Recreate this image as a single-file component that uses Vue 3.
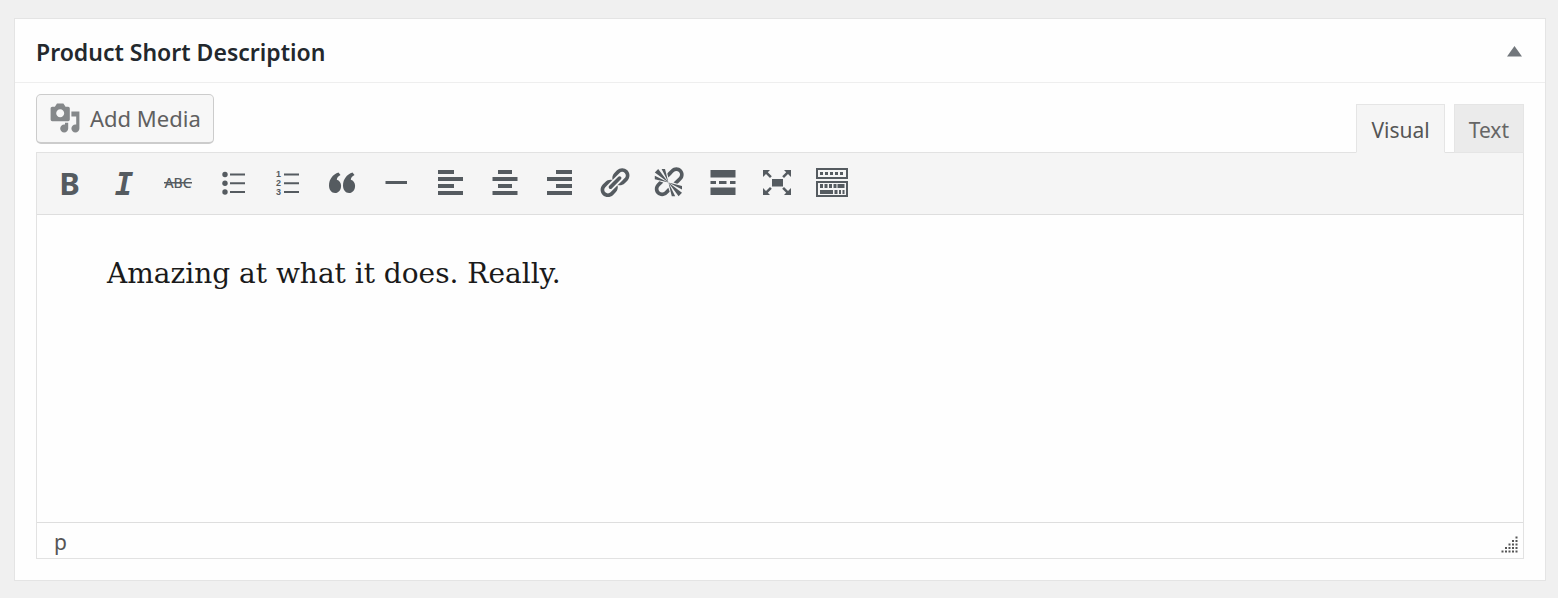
<script setup>
import { ref } from 'vue';

const title = 'Product Short Description';
const isOpen = ref(true);
const activeTab = ref('visual');
const content = ref('Amazing at what it does. Really.');

const tabs = [
    { id: 'visual', label: 'Visual' },
    { id: 'text', label: 'Text' },
];

// Each icon is drawn on a 40x40 canvas
const tools = [
    { id: 'bold', label: 'Bold' },
    { id: 'italic', label: 'Italic' },
    { id: 'strike', label: 'Strikethrough' },
    { id: 'bullets', label: 'Bulleted list', path: 'M17 10.5h15v2H17zM17 19.3h15v2H17zM17 28h15v2H17z' },
    { id: 'numbers', label: 'Numbered list', path: 'M17 10.5h15v2H17zM17 19.3h15v2H17zM17 28h15v2H17z' },
    { id: 'quote', label: 'Blockquote', path: 'M16.5 9.5l2 2.5c-2.3 1.2-3.5 2.8-3.7 4.7 2.6.7 4.3 3 4.3 6 0 4.2-2.6 7.3-6 7.3-3.7 0-6.1-3.2-6.1-7.5 0-6.3 3.7-11 9.5-13zM30.5 9.5l2 2.5c-2.3 1.2-3.5 2.8-3.7 4.7 2.6.7 4.3 3 4.3 6 0 4.2-2.6 7.3-6 7.3-3.7 0-6.1-3.2-6.1-7.5 0-6.3 3.7-11 9.5-13z' },
    { id: 'line', label: 'Horizontal line', path: 'M9.5 18H31v3H9.5z' },
    { id: 'left', label: 'Align left', path: 'M8 7h16v4H8zM8 14h25v4H8zM8 21h16v4H8zM8 28h25v4H8z' },
    { id: 'center', label: 'Align center', path: 'M13 7h14v4H13zM7.5 14h25v4h-25zM13 21h14v4H13zM7.5 28h25v4h-25z' },
    { id: 'right', label: 'Align right', path: 'M17 7h16v4H17zM8 14h25v4H8zM17 21h16v4H17zM8 28h25v4H8z' },
    { id: 'link', label: 'Insert link' },
    { id: 'unlink', label: 'Remove link' },
    { id: 'more', label: 'Read more', path: 'M7.5 7h25v7.5h-25zM7.5 18H13v3H7.5zM16 18h7.5v3H16zM27 18h5.5v3H27zM7.5 24.5h25V32h-25z' },
    { id: 'fullscreen', label: 'Fullscreen', path: 'M15 16h11v7.5H15zM6 7h7l-2.2 2.2 4 4L13 15l-4-4-3 3zM34 7v7l-3-3-4 4-1.800-1.800 4-4L27 7zM6 32v-7l3 3 4-4 1.8 1.8-4 4L13 32zM34 32h-7l2.2-2.2-4-4L27 24l4 4 3-3z' },
    { id: 'toolbar', label: 'Toolbar toggle', path: 'M4 5h32v11H4zM6 7v7h28V7zM4 18h32v16H4zM6 20v12h28V20zM8 9h3v3H8zM13 9h3v3h-3zM18 9h3v3h-3zM23 9h3v3h-3zM28 9h3v3h-3zM8 21h3v4H8zM12.5 21h3v4h-3zM17 21h3v4h-3zM21.5 21h3v4h-3zM25.5 21h7v4h-7zM8 27h13v4H8zM22.5 27h3v4h-3zM27 27h2v4h-2zM30.5 27h2v4h-2z' },
];

const linkPath = 'M17.74 2.76c1.68 1.69 1.68 4.41 0 6.1l-1.53 1.52c-1.12 1.12-2.7 1.47-4.14 1.09l2.62-2.61.76-.77.76-.76c.84-.84.84-2.2 0-3.04-.84-.85-2.2-.85-3.04 0l-.77.76-3.38 3.38c-.37-1.44-.02-3.02 1.1-4.14l1.52-1.53c1.69-1.68 4.42-1.68 6.1 0zM8.59 13.43l5.34-5.34c.42-.42.42-1.1 0-1.52-.44-.43-1.13-.39-1.53 0l-5.33 5.34c-.42.42-.42 1.1 0 1.52.44.43 1.13.39 1.52 0zm-.76 2.29l4.14-4.15c.38 1.44.03 3.02-1.09 4.14l-1.52 1.53c-1.69 1.68-4.41 1.68-6.1 0-1.68-1.68-1.68-4.42 0-6.1l1.53-1.52c1.12-1.12 2.7-1.47 4.14-1.1l-4.14 4.15c-.85.84-.85 2.2 0 3.05.84.84 2.2.84 3.04 0z';
const unlinkPath = 'M17.74 2.26c1.68 1.69 1.68 4.41 0 6.1l-1.53 1.52c-.32.33-.69.58-1.08.77L13 10l1.69-1.64.76-.77.76-.76c.84-.84.84-2.2 0-3.04-.84-.85-2.2-.85-3.04 0l-.77.76-.76.76L10 7l-.65-2.14c.19-.38.44-.75.77-1.07l1.52-1.53c1.69-1.68 4.42-1.68 6.1 0zM2 4l8 6-6-8zm4-2l4 8-2-8H6zM2 6l8 4-8-2V6zm7.36 7.69L10 13l.74 2.35-1.38 1.39c-1.69 1.68-4.41 1.68-6.1 0-1.68-1.68-1.68-4.42 0-6.1l1.39-1.38L7 10l-.69.64-1.52 1.53c-.85.84-.85 2.2 0 3.04.84.85 2.2.85 3.04 0zM18 16l-8-6 6 8zm-4 2l-4-8 2 8h2zm4-4l-8-4 8 2v2z';
const mediaPath = 'M13 11V4c0-.55-.45-1-1-1h-1.67L9 1H5L3.67 3H2c-.55 0-1 .45-1 1v7c0 .55.45 1 1 1h10c.55 0 1-.45 1-1zM7 4.5c1.38 0 2.5 1.12 2.5 2.5S8.38 9.5 7 9.5 4.5 8.38 4.5 7 5.62 4.5 7 4.5zM14 6h5v10.5c0 1.38-1.12 2.5-2.5 2.5S14 17.88 14 16.5s1.12-2.5 2.5-2.5c.17 0 .34.02.5.05V9h-3V6zm-4 8.05V13h2v3.5c0 1.38-1.12 2.5-2.5 2.5S7 17.88 7 16.5 8.12 14 9.5 14c.17 0 .34.02.5.05z';
</script>

<template>
    <section class="postbox">
        <header class="postbox-header">
            <h2 class="postbox-title">{{ title }}</h2>
            <button type="button" class="toggle-button" aria-label="Toggle panel" :aria-expanded="isOpen" @click="isOpen = !isOpen">
                <svg class="toggle-icon" viewBox="0 0 16 12"><path d="M8.5 0L16 10.5H1z" /></svg>
            </button>
        </header>

        <div v-if="isOpen" class="inside">
            <div class="editor-tools">
                <button type="button" class="media-button">
                    <svg class="media-icon" viewBox="0 0 20 20"><path fill-rule="evenodd" :d="mediaPath" /></svg>
                    Add Media
                </button>
                <div class="editor-tabs">
                    <button
                        v-for="tab in tabs"
                        :key="tab.id"
                        type="button"
                        class="tab"
                        :class="{ active: activeTab === tab.id }"
                        @click="activeTab = tab.id"
                    >{{ tab.label }}</button>
                </div>
            </div>

            <div class="editor">
                <div class="toolbar">
                    <div class="toolbar-group" role="toolbar" aria-label="Formatting">
                        <button v-for="tool in tools" :key="tool.id" type="button" class="tool" :aria-label="tool.label">
                            <svg class="tool-icon" viewBox="0 0 40 40">
                                <text v-if="tool.id === 'bold'" class="glyph-bold" x="20.5" y="32">B</text>
                                <text v-if="tool.id === 'italic'" class="glyph-italic" x="20" y="32">I</text>
                                <template v-if="tool.id === 'strike'">
                                    <text class="glyph-strike" x="20" y="25">ABC</text>
                                    <path d="M6 19h28v1.5H6z" />
                                </template>
                                <template v-if="tool.id === 'bullets'">
                                    <circle cx="12" cy="11.5" r="2.7" />
                                    <circle cx="12" cy="20.3" r="2.7" />
                                    <circle cx="12" cy="29" r="2.7" />
                                </template>
                                <template v-if="tool.id === 'numbers'">
                                    <text class="glyph-number" x="11.5" y="14">1</text>
                                    <text class="glyph-number" x="11.5" y="23">2</text>
                                    <text class="glyph-number" x="11.5" y="32">3</text>
                                </template>
                                <path v-if="tool.id === 'link'" transform="translate(3.2 2.6) scale(1.7)" :d="linkPath" />
                                <path v-if="tool.id === 'unlink'" transform="translate(3.4 2.6) scale(1.7)" :d="unlinkPath" />
                                <path v-if="tool.path" fill-rule="evenodd" :d="tool.path" />
                            </svg>
                        </button>
                    </div>
                </div>

                <textarea v-model="content" class="editor-content" :aria-label="title" spellcheck="false"></textarea>

                <div class="status-bar">
                    <span class="status-path">p</span>
                    <svg class="resize-icon" viewBox="0 0 18 18">
                        <template v-for="row in 5" :key="row">
                            <rect v-for="col in row" :key="col" :x="18 - col * 3.5" :y="row * 3.5 - 2" width="2" height="2" />
                        </template>
                    </svg>
                </div>
            </div>
        </div>
    </section>
</template>

<style>
body {
    background-color: #f0f0f0;
}
</style>

<style scoped>
.postbox {
    margin: 18px 12px 17px 14px;
    border: 1px solid #e4e4e4;
    background-color: #fefefe;
    color: #555;
    font-family: "Noto Sans", sans-serif;
}

button {
    margin: 0;
    font-family: inherit;
    cursor: pointer;
}

.postbox-header {
    display: flex;
    align-items: center;
    justify-content: space-between;
    height: 61px;
    padding: 2px 21px 0;
    border-bottom: 1px solid #eee;
}

.postbox-title {
    margin: 0;
    color: #23282d;
    font-size: 23px;
    font-weight: 600;
    line-height: 32px;
}

.toggle-button {
    display: flex;
    padding: 2px;
    border: none;
    background: none;
}

.toggle-icon {
    width: 16px;
    height: 12px;
    fill: #72777c;
}

.inside {
    padding: 11px 21px 21px;
}

.editor-tools {
    display: flex;
    align-items: flex-end;
    justify-content: space-between;
}

.media-button {
    display: flex;
    align-items: center;
    gap: 9px;
    height: 50px;
    margin-bottom: 8px;
    padding: 0 12px 2px;
    border: 1px solid #ccc;
    border-bottom-width: 2px;
    border-radius: 5px;
    background-color: #f7f7f7;
    color: #606060;
    font-size: 22px;
    line-height: 30px;
}

.media-icon {
    width: 32px;
    height: 32px;
    fill: #85888a;
}

.editor-tabs {
    display: flex;
    gap: 9px;
}

.tab {
    position: relative;
    height: 49px;
    margin-bottom: -1px;
    padding: 2px 14px 0;
    border: 1px solid #e5e5e5;
    background-color: #ebebeb;
    color: #666;
    font-size: 21px;
    line-height: 30px;
}

.tab.active {
    border-bottom-color: #f5f5f5;
    background-color: #f5f5f5;
    color: #555;
}

.editor {
    border: 1px solid #e2e2e2;
}

.toolbar {
    padding: 4px 5px 6px;
    border-bottom: 1px solid #dedede;
    background-color: #f5f5f5;
}

.toolbar-group {
    display: grid;
    grid-template-columns: repeat(15, 1fr);
    max-width: 817px;
}

.tool {
    display: flex;
    align-items: center;
    justify-content: center;
    height: 51px;
    padding: 0;
    border: none;
    background: none;
}

.tool-icon {
    width: 40px;
    height: 40px;
    overflow: visible;
    fill: #555b60;
}

.tool-icon text {
    font-family: "Noto Sans", sans-serif;
    text-anchor: middle;
}

.tool-icon .glyph-bold {
    font-size: 31px;
    font-weight: 700;
}

.tool-icon .glyph-italic {
    font-family: "DejaVu Sans Mono", monospace;
    font-size: 31px;
    font-style: italic;
    font-weight: 700;
}

.tool-icon .glyph-strike {
    font-size: 14px;
    font-weight: 500;
}

.tool-icon .glyph-number {
    font-family: "Liberation Sans", sans-serif;
    font-size: 9px;
    font-weight: 700;
}

.editor-content {
    display: block;
    box-sizing: border-box;
    width: 100%;
    height: 307px;
    padding: 37px 70px;
    border: none;
    outline: none;
    resize: none;
    background-color: #fefefe;
    color: #1a1a1a;
    font-family: "DejaVu Serif", serif;
    font-size: 28px;
    line-height: 44px;
}

.status-bar {
    display: flex;
    align-items: flex-end;
    justify-content: space-between;
    height: 35px;
    padding: 0 4px 0 17px;
    border-top: 1px solid #dedede;
}

.status-path {
    font-size: 21px;
    line-height: 32px;
}

.resize-icon {
    width: 18px;
    height: 18px;
    margin-bottom: 5px;
    fill: #555;
}
</style>
